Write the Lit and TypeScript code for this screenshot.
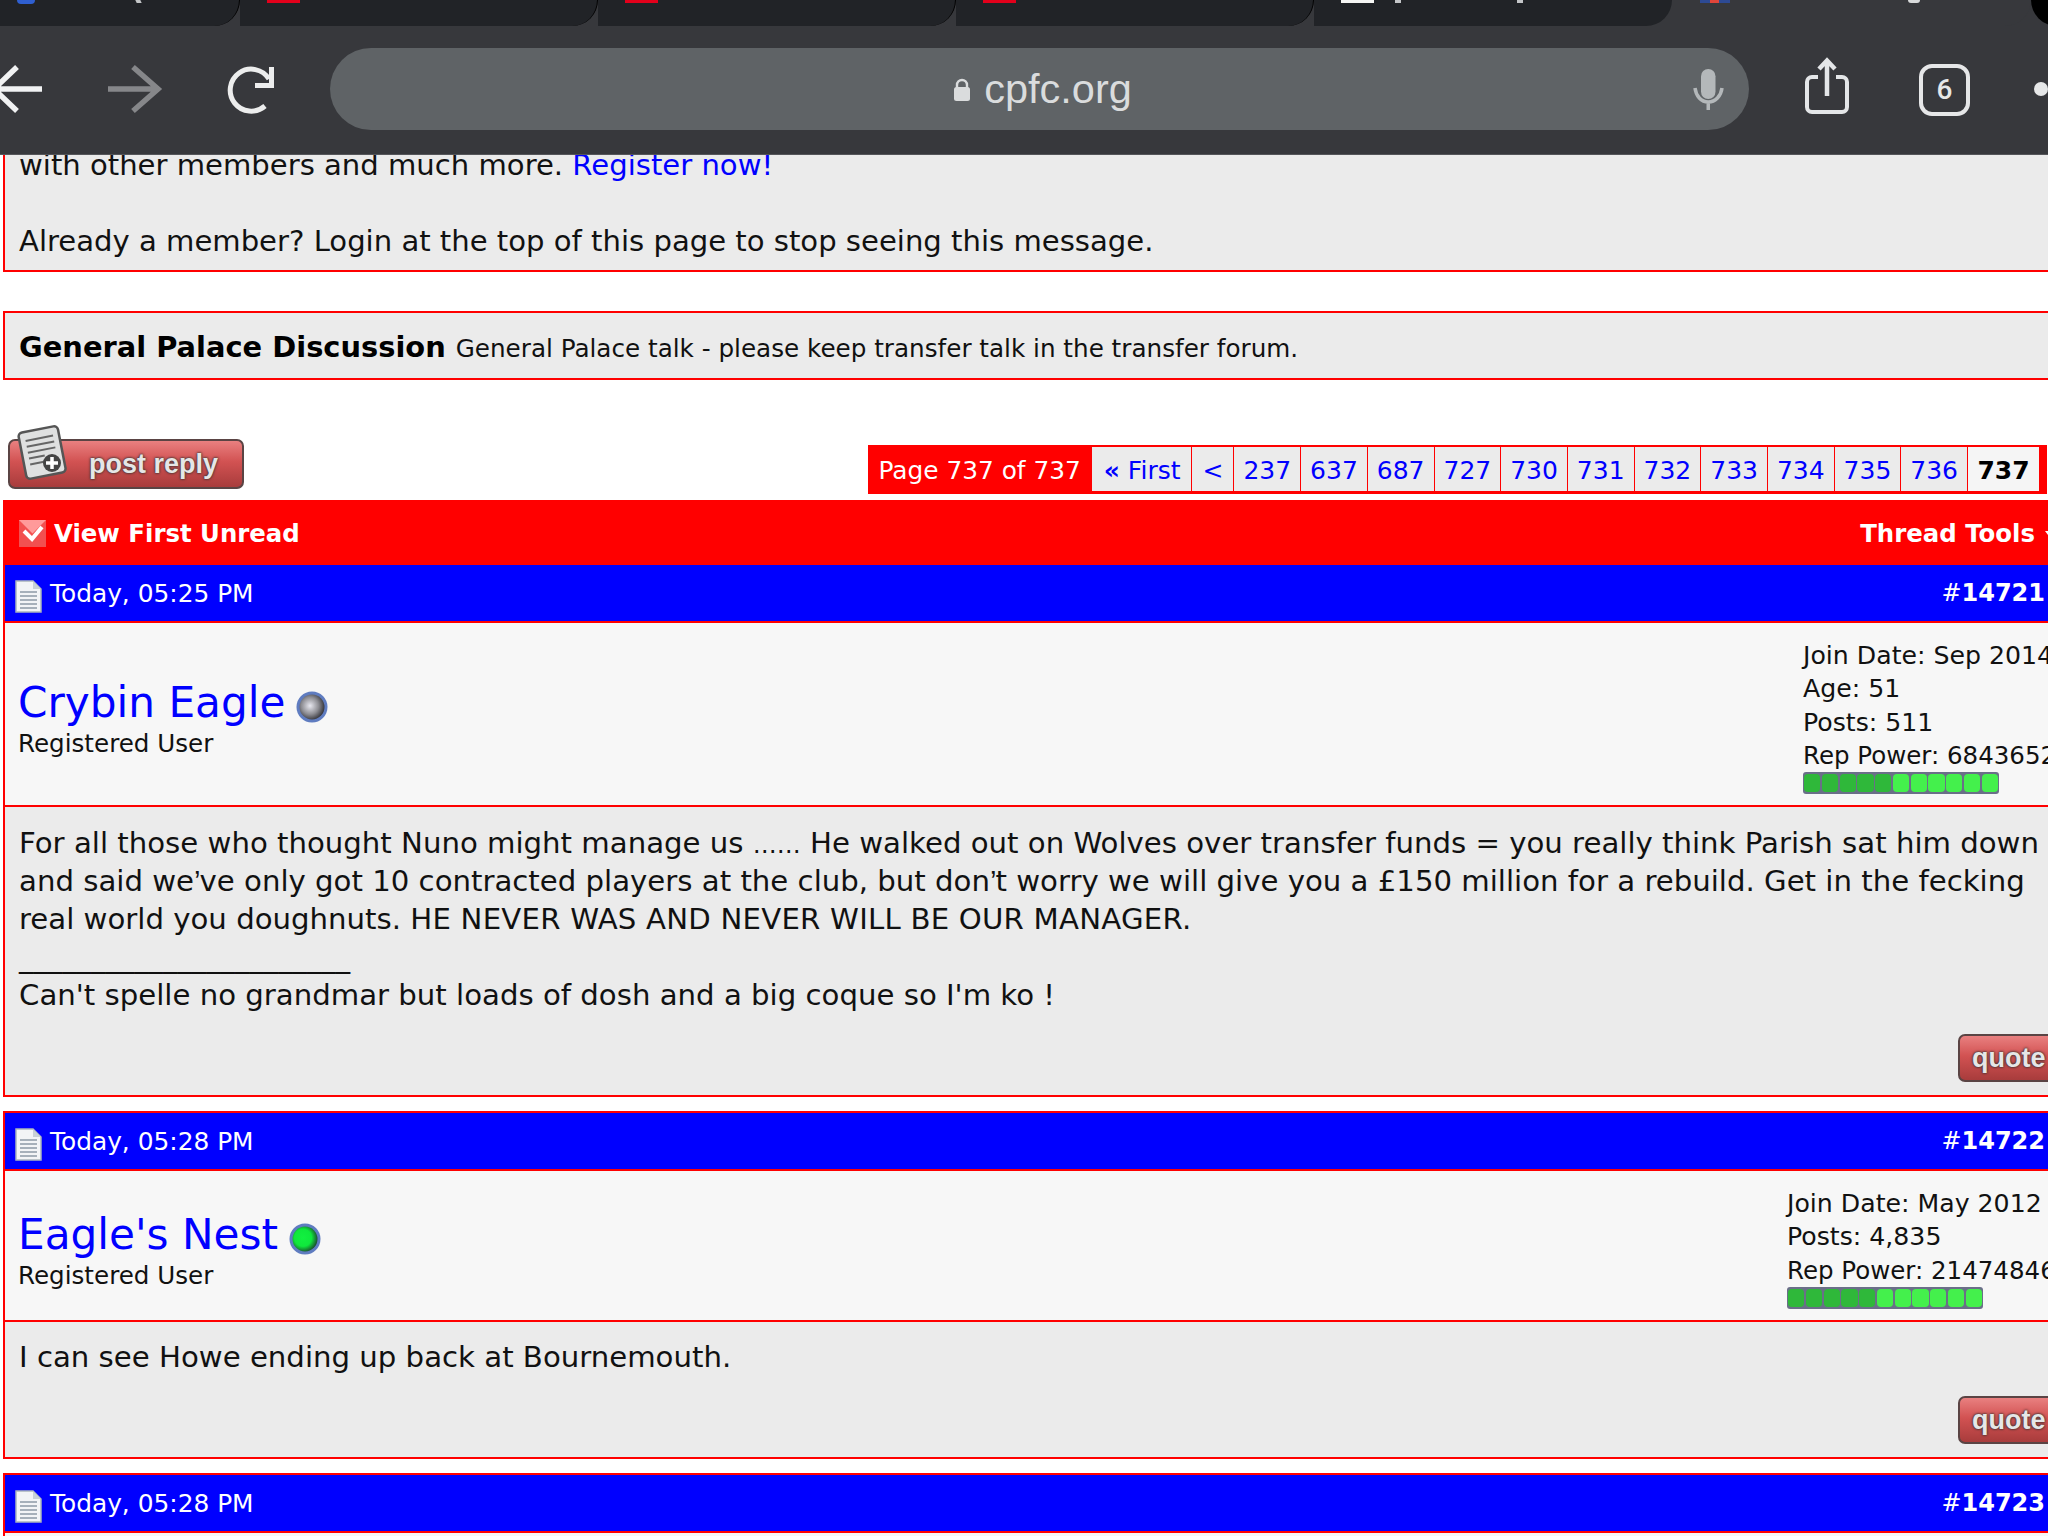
import { LitElement, html, css, svg } from "lit";
import { customElement } from "lit/decorators.js";

const PAGES = ["237","637","687","727","730","731","732","733","734","735","736"];

const docIcon = svg`<svg class="doc" viewBox="0 0 27 33"><path d="M1 1h17l8 8v23H1z" fill="#f2f4f6" stroke="#a9b4bc" stroke-width="1.5"/><path d="M18 1v8h8z" fill="#c8d0d6"/><path d="M5 12h17M5 16h17M5 20h17M5 24h17M5 28h17" stroke="#a6b0ba" stroke-width="2"/></svg>`;

const dot = (id: string, core: string, hi: string, rim: string) => svg`<svg class="dot" viewBox="0 0 32 32"><defs><radialGradient id="${id}" cx=".42" cy=".45" r=".62"><stop offset="0" stop-color="${hi}"/><stop offset=".55" stop-color="${core}"/><stop offset="1" stop-color="${rim}"/></radialGradient></defs><circle cx="16" cy="16" r="15.5" fill="#5f7cc0"/><circle cx="16" cy="16" r="12.500" fill="url(#${id})"/></svg>`;

interface Post { date: string; num: string; name: string; online: boolean; stats: string[]; body: unknown; cls: string }

const POSTS: Post[] = [
  { date: "Today, 05:25 PM", num: "14721", name: "Crybin Eagle", online: false, cls: "wide",
    stats: ["Join Date: Sep 2014", "Age: 51", "Posts: 511", "Rep Power: 684365212"],
    body: html`For all those who thought Nuno might manage us <span class="ell">……</span> He walked out on Wolves over transfer funds = you really think Parish sat him down and said we<span class="ap">’</span>ve only got 10 contracted players at the club, but don<span class="ap">’</span>t worry we will give you a £150 million for a rebuild. Get in the fecking real world you doughnuts. <span class="caps">HE NEVER WAS AND NEVER WILL BE OUR MANAGER.</span><br><span class="rule">_______________________</span><br>Can't spelle no grandmar but loads of dosh and a big coque so I'm ko !` },
  { date: "Today, 05:28 PM", num: "14722", name: "Eagle's Nest", online: true, cls: "wider",
    stats: ["Join Date: May 2012", "Posts: 4,835", "Rep Power: 2147484646"],
    body: html`I can see Howe ending up back at Bournemouth.` },
];

@customElement("app-root")
export class AppRoot extends LitElement {
  static styles = css`
    :host { display: block; width: 2048px; height: 1536px; overflow: hidden; position: relative; background: #fff; font-family: "DejaVu Sans", sans-serif; font-size: 29.2px; color: #111; }
    a { color: #0000ff; text-decoration: none; }

    .chrome { position: absolute; top: 0; left: 0; width: 2048px; height: 155px; background: #37383c; border-bottom: 1px solid #55565a; box-sizing: border-box; z-index: 2; }
    .tabs { display: flex; height: 26px; overflow: hidden; }
    .tab { flex: none; width: 358px; height: 26px; box-sizing: border-box; background: #212327; border-right: 1.5px solid #000; border-bottom-right-radius: 30px; display: flex; padding-left: 27px; overflow: hidden; }
    .tab.first { width: 240px; padding-left: 17px; }
    .tab.last { border-right: 0; }
    .tab.active { width: 359px; background: #37383c; border: 0; padding-left: 28px; }
    .tab.next { width: 30px; background: #000; border: 0; border-radius: 0 0 0 26px; padding: 0; }
    .fav { flex: none; width: 33px; height: 3px; background: #e3001b; }
    .fav.white { background: #f6f6f4; }
    .fav.blue { width: 18px; height: 4px; background: #2f5fd0; border-radius: 0 0 9px 9px; }
    .fav.flag { width: 30px; height: 3px; background: linear-gradient(90deg, #2d4a94 35%, #e0453a 35% 65%, #2d4a94 65%); }
    .bit { flex: none; height: 3px; background: #c4c6c8; }
    .bit.desc { width: 5px; margin-left: 101px; transform: skewX(25deg); }
    .bit.open { width: 6px; margin-left: 21px; }
    .bit.close { width: 6px; margin-left: 116px; }
    .bit.g { width: 12px; height: 3px; margin-left: 178px; border-radius: 0 0 6px 6px; background: #d8dadb; }
    .toolbar { display: flex; align-items: center; height: 128px; padding-bottom: 2px; box-sizing: border-box; }
    .toolbar svg { flex: none; display: block; overflow: visible; }
    .back { width: 52px; height: 46px; margin-left: -8px; }
    .fwd { width: 52px; height: 46px; margin-left: 64px; }
    .reload { width: 50px; height: 50px; margin: 2px 0 0 67px; }
    .pill { flex: none; width: 1419px; height: 82px; margin-left: 53px; background: #5f6366; border-radius: 41px; display: flex; align-items: center; box-sizing: border-box; position: relative; justify-content: center; padding-left: 6px; gap: 13px; color: #dadcdd; font: 41.500px "Liberation Sans", sans-serif; }
    .lock { width: 18px; height: 23px; }
    .mic { width: 31px; height: 41px; position: absolute; right: 25px; top: 21px; }
    .share { width: 44px; height: 57px; margin: -6px 0 0 56px; }
    .count { flex: none; width: 51px; height: 52px; box-sizing: border-box; margin: 2px 0 0 70px; border: 4.5px solid #e6e7e8; border-radius: 13px; color: #e6e7e8; font: 500 28px/43px Roboto, sans-serif; text-align: center; }
    .more { flex: none; width: 14px; height: 14px; border-radius: 50%; background: #e6e7e8; margin-left: 64px; }

    .page { width: 2058px; padding-left: 3px; box-sizing: border-box; }
    .notice { background: #ebebeb; border: solid #ff0000; border-width: 0 2px 2px; padding: 146px 14px 7px; line-height: 38px; height: 272px; box-sizing: border-box; font-size: 29.1px; }
    .forum { margin-top: 39px; height: 69px; box-sizing: border-box; background: #ebebeb; border: 2px solid #ff0000; padding: 0 14px; display: flex; align-items: baseline; gap: 10px; font-size: 24.65px; line-height: 69px; }
    .forum b { font-size: 28.9px; color: #000; }

    .controls { height: 120px; display: flex; justify-content: space-between; align-items: flex-end; box-sizing: border-box; padding-bottom: 6px; }
    .btn { position: relative; height: 50px; box-sizing: border-box; border: 2px solid #5a4444; border-radius: 7px; background: linear-gradient(#e98080, #d25252 45%, #a83c3c); color: #e6e6e6; font: 700 27px/46px "Liberation Sans", sans-serif; text-shadow: 0 0 3px #333, 0 0 2px #333; }
    .post-reply { width: 236px; margin: 0 0 5px 5px; padding-left: 79px; }
    .note { position: absolute; left: 7px; top: -17px; width: 50px; height: 58px; }
    .pager { display: flex; align-items: stretch; height: 49px; margin-right: 11px; background: #ff0000; padding: 2px 8px 3px 11px; box-sizing: border-box; font-size: 25px; gap: 1px; }
    .pager span.lab { color: #fff; line-height: 47px; padding-right: 10px; white-space: nowrap; font-size: 24.8px; }
    .pager a, .pager b { background: #ebebeb; line-height: 47px; height: 44px; padding: 0 10px; white-space: nowrap; }
    .pager a.first { padding: 0 11px 0 12px; }
    .pager a.n { width: 65.7px; padding: 0; text-align: center; box-sizing: border-box; }
    .pager a i { font-style: normal; font-weight: 700; }
    .pager b { background: #f5f5f5; color: #000; width: 71px; padding: 0; text-align: center; }

    .bar { height: 65px; background: #ff0000; color: #fff; font-weight: 700; font-size: 24.4px; display: flex; align-items: center; justify-content: space-between; padding: 2px 1px 0 16px; box-sizing: border-box; }
    .bar-left { display: flex; align-items: center; gap: 8px; }
    .chk { width: 27px; height: 27px; display: block; }
    .bar-right { display: flex; align-items: center; gap: 10px; }
    .arrow { width: 0; height: 0; border: 6px solid transparent; border-top: 8px solid #fff; margin-top: 8px; }

    .post { border: solid #ff0000; border-width: 0 2px 2px; margin-bottom: 14px; background: #ebebeb; }
    .post.boxed { border-top-width: 2px; }
    .head { height: 58px; background: #0000ff; color: #fff; display: flex; align-items: center; justify-content: space-between; padding: 0 11px 0 10px; font-size: 24.85px; box-sizing: border-box; border-bottom: 2px solid #ff0000; }
    .head-left { display: flex; align-items: center; gap: 8px; }
    .doc { width: 27px; height: 33px; margin-top: 6px; display: block; }
    .num { font-size: 24px; }
    .details { display: flex; justify-content: space-between; background: #f7f7f7; padding: 16px 0 11px 13px; border-bottom: 2px solid #ff0000; }
    .who { align-self: center; margin-top: 4px; }
    .name-row { display: flex; align-items: center; gap: 11px; line-height: 51px; }
    .name { font-size: 42.2px; }
    .dot { width: 32px; height: 32px; margin-top: 9px; display: block; }
    .role { font-size: 24.6px; line-height: 32px; }
    .stats { flex: none; font-size: 25.2px; line-height: 33.3px; white-space: nowrap; }
    .stats .power { font-size: 24.5px; }
    .stats.wide { width: 253px; }
    .stats.wider { width: 269px; }
    .rep { display: flex; width: 196px; height: 22px; background: #6a6f88; border-radius: 3px; padding: 2px 1px; box-sizing: border-box; gap: 1.5px; }
    .rep i { flex: 1; border-radius: 4px; background: #44f04c; }
    .rep i.d { background: #2fb83a; }
    .body { padding: 17px 4px 0 14px; line-height: 38px; position: relative; box-sizing: border-box; }
    .body.long { height: 288px; }
    .body.short { height: 135px; padding-top: 16px; }
    .ell { font-size: 24px; line-height: 0; }
    .ap { font-family: "Liberation Sans", sans-serif; letter-spacing: -1px; line-height: 0; }
    .caps { letter-spacing: 0.22px; }
    .rule { font-size: 28.8px; line-height: 0; }
    .quote { position: absolute; left: 1953px; bottom: 13px; width: 120px; padding-left: 12px; height: 48px; line-height: 44px; }
  `;

  render() {
    return html`
      <div class="chrome">
        <div class="tabs">
          <div class="tab first"><span class="fav blue"></span><span class="bit desc"></span></div>
          <div class="tab"><span class="fav"></span></div>
          <div class="tab"><span class="fav"></span></div>
          <div class="tab"><span class="fav"></span></div>
          <div class="tab last"><span class="fav white"></span><span class="bit open"></span><span class="bit close"></span></div>
          <div class="tab active"><span class="fav flag"></span><span class="bit g"></span></div>
          <div class="tab next"></div>
        </div>
        <div class="toolbar">
          <svg class="back" viewBox="0 0 52 46"><path d="M2 23h48M25 1 2 23l23 22" fill="none" stroke="#f1f2f3" stroke-width="5.500"/></svg>
          <svg class="fwd" viewBox="0 0 52 46"><path d="M0 23h49M25 1l25 22-25 22" fill="none" stroke="#86878a" stroke-width="5.500"/></svg>
          <svg class="reload" viewBox="0 0 50 50"><path d="M38 41a21 21 0 1 1 4-27" fill="none" stroke="#eceded" stroke-width="5"/><path d="M47 2v21H28v-5h14V2z" fill="#eceded"/></svg>
          <div class="pill">
            <svg class="lock" viewBox="0 0 18 23"><path d="M4 10V7a5 5 0 0 1 10 0v3" fill="none" stroke="#dadcdd" stroke-width="2.400"/><rect x="1" y="9" width="16" height="14" rx="2.500" fill="#dadcdd"/></svg>
            <span>cpfc.org</span>
            <svg class="mic" viewBox="0 0 31 41"><rect x="8" y="0" width="14.500" height="30" rx="7.250" fill="#b4b8ba"/><path d="M2 19c1 8 6 14 13.250 14S28 27 29 19M15.250 33v8" fill="none" stroke="#b4b8ba" stroke-width="3.500"/></svg>
          </div>
          <svg class="share" viewBox="0 0 44 57"><path d="M13 19H7a5 5 0 0 0-5 5v25a5 5 0 0 0 5 5h30a5 5 0 0 0 5-5V24a5 5 0 0 0-5-5h-6" fill="none" stroke="#e4e6e8" stroke-width="4"/><path d="M22 38V3M14 11l8-8.500 8 8.500" fill="none" stroke="#e4e6e8" stroke-width="4.500"/></svg>
          <div class="count">6</div>
          <div class="more"></div>
        </div>
      </div>

      <div class="page">
        <div class="notice">
          with other members and much more. <a>Register now!</a><br><br>
          Already a member? Login at the top of this page to stop seeing this message.
        </div>
        <div class="forum"><b>General Palace Discussion</b><span>General Palace talk - please keep transfer talk in the transfer forum.</span></div>
        <div class="controls">
          <div class="btn post-reply">
            <svg class="note" viewBox="0 0 50 58"><g transform="rotate(-11 25 28)"><rect x="5" y="5" width="40" height="47" rx="4" fill="#dfe0e0" stroke="#555" stroke-width="2.500"/><path d="M11 14h28M11 20h28M11 26h28M11 32h16M11 38h14" stroke="#666" stroke-width="2"/></g><circle cx="35" cy="39" r="9" fill="#444"/><path d="M35 33v12M29 39h12" stroke="#fff" stroke-width="3.500"/></svg>
            post reply
          </div>
          <div class="pager">
            <span class="lab">Page 737 of 737</span>
            <a class="first"><i>«</i> First</a><a>&lt;</a>
            ${PAGES.map(p => html`<a class="n">${p}</a>`)}
            <b>737</b>
          </div>
        </div>
        <div class="bar">
          <div class="bar-left">
            <svg class="chk" viewBox="0 0 27 27"><rect width="27" height="27" fill="#f25050"/><path d="M0 0l13.500 13.500L27 0z" fill="#ff9a9a"/><path d="M5 11l8 8L23 7" fill="none" stroke="#fff" stroke-width="4"/></svg>
            View First Unread
          </div>
          <div class="bar-right">Thread Tools<span class="arrow"></span></div>
        </div>
        ${POSTS.map((p, i) => html`
          <div class="post ${i > 0 ? "boxed" : ""}">
            <div class="head">
              <div class="head-left">${docIcon}<span>${p.date}</span></div>
              <div class="num">#<b>${p.num}</b></div>
            </div>
            <div class="details">
              <div class="who">
                <div class="name-row"><a class="name">${p.name}</a>${p.online ? dot("on", "#0fe83c", "#12f040", "#1c3a2c") : dot("off", "#8e8e94", "#e8e8f0", "#2a2a30")}</div>
                <div class="role">Registered User</div>
              </div>
              <div class="stats ${p.cls}">
                ${p.stats.map(s => html`<div class="${s.startsWith("Rep") ? "power" : ""}">${s}</div>`)}
                <div class="rep">${Array.from({ length: 11 }, (_, k) => html`<i class="${k < 5 ? "d" : ""}"></i>`)}</div>
              </div>
            </div>
            <div class="body ${i === 0 ? "long" : "short"}">
              ${p.body}
              <div class="btn quote">quote</div>
            </div>
          </div>`)}
        <div class="post boxed">
          <div class="head">
            <div class="head-left">${docIcon}<span>Today, 05:28 PM</span></div>
            <div class="num">#<b>14723</b></div>
          </div>
          <div class="details"></div>
        </div>
      </div>
    `;
  }
}
